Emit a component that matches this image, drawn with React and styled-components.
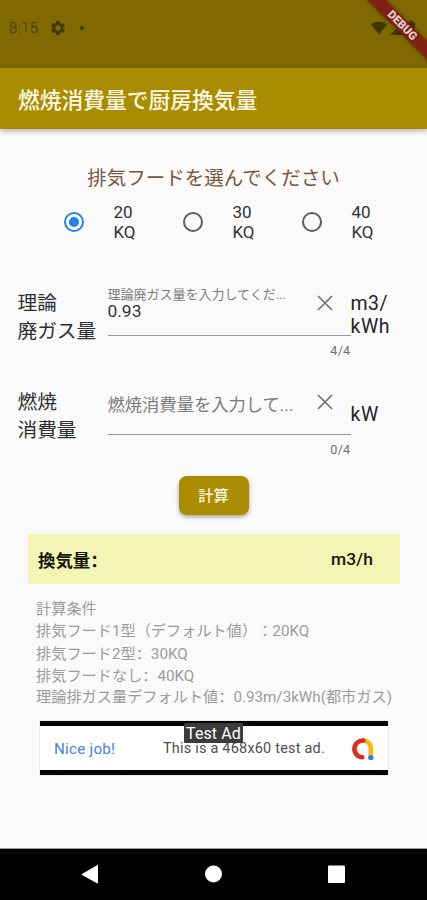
import React, { useState } from "react";
import styled, { createGlobalStyle } from "styled-components";

const GlobalStyle = createGlobalStyle`
  *, *::before, *::after { box-sizing: border-box; }
  body {
    margin: 0;
    background: #fafafa;
    font-family: Roboto, "Noto Sans CJK JP", sans-serif;
    text-spacing-trim: space-all;
  }
`;

const Screen = styled.div`
  position: relative;
  display: flex;
  flex-direction: column;
  width: 427px;
  height: 900px;
  overflow: hidden;
  background: #fafafa;
  color: #222;
`;

const StatusBar = styled.header`
  display: flex;
  align-items: center;
  flex: none;
  height: 68px;
  padding: 0 9px 13px 9px;
  background: #7f6900;
  color: #413600;
`;

const Clock = styled.span`
  width: 42px;
  font-size: 15px;
  font-weight: 300;
  letter-spacing: 0.35px;
`;

const StatusDot = styled.span`
  width: 4px;
  height: 4px;
  margin-left: 15px;
  border-radius: 50%;
  background: currentColor;
`;

const StatusIcons = styled.div`
  display: flex;
  align-items: center;
  gap: 3px;
  margin-left: auto;
  margin-right: 3px;
`;

const Ribbon = styled.div`
  position: absolute;
  top: 19px;
  left: 341.5px;
  width: 120px;
  height: 13.4px;
  transform: rotate(45deg);
  background: #7e2013;
  box-shadow: 0 0 5px rgba(0, 0, 0, 0.35);
  color: #e4cfcb;
  font-size: 11.5px;
  font-weight: 900;
  line-height: 13.4px;
  text-align: center;
`;

const AppBar = styled.div`
  display: flex;
  align-items: center;
  flex: none;
  height: 61px;
  padding: 4px 18px 0;
  background: #aa8c00;
  box-shadow: 0 2px 5px rgba(0, 0, 0, 0.3);
`;

const Title = styled.h1`
  margin: 0;
  color: #fff8e6;
  font-size: 21.75px;
  font-weight: 500;
  line-height: 30px;
`;

const Main = styled.main`
  display: flex;
  flex-direction: column;
  flex: 1;
`;

const Prompt = styled.h2`
  margin: 36px 0 0;
  color: #79563b;
  font-size: 19.5px;
  font-weight: 400;
  line-height: 28px;
  text-align: center;
`;

const RadioGroup = styled.div`
  display: flex;
  height: 40px;
  margin: 9px 0 0 64.4px;
`;

const RadioOption = styled.div`
  display: flex;
  align-items: center;
  gap: 29px;
  width: 119px;
  cursor: pointer;
`;

const RadioMark = styled.span`
  display: grid;
  place-items: center;
  width: 20px;
  height: 20px;
  border: 2px solid ${(p) => (p.$on ? "#2583e8" : "#5d5d5d")};
  border-radius: 50%;

  &::after {
    content: "";
    width: 10px;
    height: 10px;
    border-radius: 50%;
    background: ${(p) => (p.$on ? "#2583e8" : "transparent")};
  }
`;

const RadioLabel = styled.span`
  width: 30px;
  color: #333;
  font-size: 17px;
  line-height: 20px;
`;

const FieldGroup = styled.div`
  flex: none;
  height: 191px;
  margin-top: 43px;
`;

const FieldRow = styled.section`
  display: grid;
  grid-template-columns: 90px 243px 1fr;
  height: 99px;
  padding-left: 17.5px;
`;

const FieldName = styled.div`
  padding-top: 5px;
  font-size: 19.7px;
  line-height: 28px;
  white-space: nowrap;
  color: #303030;
`;

const FieldBody = styled.div`
  display: flex;
  flex-direction: column;
`;

const InputBox = styled.div`
  display: flex;
  justify-content: space-between;
  height: 51px;
  border-bottom: 1px solid #999;
`;

const InputText = styled.div`
  padding-top: ${(p) => (p.$filled ? "0" : "9px")};
`;

const FloatingLabel = styled.div`
  height: 17px;
  color: #7c7c7c;
  font-size: 13px;
  line-height: 20px;
  white-space: nowrap;
`;

const Value = styled.div`
  color: #333;
  font-size: 17.4px;
  line-height: 18px;
`;

const Placeholder = styled.div`
  color: #7c7c7c;
  font-size: 17.3px;
  line-height: 24px;
  white-space: nowrap;
`;

const ClearButton = styled.button`
  display: block;
  width: 26px;
  height: 26px;
  margin: 4.5px 13px 0 0;
  padding: 0;
  border: 0;
  background: none;
  flex: none;
`;

const Counter = styled.div`
  padding-top: 7px;
  color: #707070;
  font-size: 12.6px;
  letter-spacing: 0.3px;
  line-height: 16px;
  text-align: right;
`;

const Unit = styled.div`
  padding-top: ${(p) => (p.$single ? "19px" : "7px")};
  color: #242424;
  font-size: 19.5px;
  letter-spacing: 0.5px;
  line-height: 23px;
  white-space: pre-line;
`;

const CalcButton = styled.button`
  align-self: center;
  flex: none;
  width: 70px;
  height: 39px;
  padding: 1px 0 0;
  border: 0;
  border-radius: 8px;
  background: #aa8c00;
  box-shadow: 0 2px 4px rgba(0, 0, 0, 0.35);
  color: #fff6df;
  font: 500 15.2px/38px Roboto, "Noto Sans CJK JP", sans-serif;
`;

const Result = styled.div`
  display: flex;
  align-items: center;
  justify-content: space-between;
  flex: none;
  height: 50px;
  margin: 19px 27px 0 28px;
  padding: 0 27px 0 10px;
  background: #f3f5b5;
  color: #161606;
  font-size: 17.4px;
  font-weight: 700;
`;

const ResultUnit = styled.span`
  font-weight: 500;
  letter-spacing: 0.1px;
`;

/* Full-width colon whose dots sit at the left of its cell. */
const Colon = styled.span`
  font-family: "Noto Sans CJK SC", sans-serif;
`;

const Notes = styled.div`
  margin: 14px 0 0 36px;
  padding-top: 1px;
  height: 108px;
  color: #9c9c9c;
  font-size: 15.2px;
  line-height: 21px;
  white-space: nowrap;
`;

const NoteLine = styled.div`
  height: 21.6px;
`;

const Ad = styled.aside`
  position: relative;
  display: grid;
  grid-template-columns: 109px 1fr 24px;
  align-items: center;
  flex: none;
  height: 54px;
  margin: 15px 39px 0 40px;
  padding: 1px 13px 0 14px;
  border: solid #050505;
  border-width: 5px 0;
  background: #fff;
  box-shadow: 0 0 1px rgba(0, 0, 0, 0.35);
  white-space: nowrap;
`;

const AdHeadline = styled.span`
  color: #4380ec;
  font-size: 15.2px;
  letter-spacing: 0.25px;
`;

const AdCopy = styled.span`
  color: #505050;
  font-size: 14.5px;
  letter-spacing: 0.2px;
`;

const AdBadge = styled.span`
  position: absolute;
  top: -3px;
  left: 144px;
  width: 59px;
  height: 20px;
  border-radius: 1px;
  background: #3b3b3b;
  color: #fff;
  font-size: 16px;
  letter-spacing: 0.1px;
  line-height: 21px;
  text-align: center;
`;

const NavBar = styled.nav`
  display: flex;
  align-items: center;
  justify-content: space-between;
  flex: none;
  height: 51px;
  padding: 0 80px 1px 79px;
  background: #000;
  box-shadow: 0 -1px 0 #999;
`;

const GearIcon = () => (
  <svg width="14" height="14" viewBox="2 2 20 20" fill="currentColor">
    <path
      fillRule="evenodd"
      d="M19.43 12.98a7.8 7.8 0 0 0 0-1.96l2.11-1.65c.19-.15.24-.42.12-.64l-2-3.46c-.12-.22-.39-.3-.61-.22l-2.49 1a7.3 7.3 0 0 0-1.69-.98l-.38-2.65A.49.49 0 0 0 14 2h-4a.49.49 0 0 0-.49.42l-.38 2.65c-.61.25-1.17.59-1.69.98l-2.49-1a.49.49 0 0 0-.61.22l-2 3.46c-.13.22-.07.49.12.64l2.11 1.65a7.8 7.8 0 0 0 0 1.96l-2.11 1.65c-.19.15-.24.42-.12.64l2 3.46c.12.22.39.3.61.22l2.49-1c.52.4 1.08.73 1.69.98l.38 2.65c.03.24.24.42.49.42h4c.25 0 .46-.18.49-.42l.38-2.65c.61-.25 1.17-.59 1.69-.98l2.49 1c.23.09.49 0 .61-.22l2-3.46a.5.5 0 0 0-.12-.64zM12 15.8a3.8 3.8 0 1 1 0-7.6 3.8 3.8 0 0 1 0 7.600z"
    />
  </svg>
);

const WifiIcon = () => (
  <svg width="16" height="14" viewBox="0 0 16 14" fill="currentColor">
    <path d="M0 3.6C4.6-.2 11.4-.2 16 3.6L8 13.6z" />
  </svg>
);

const SignalIcon = () => (
  <svg width="14" height="14" viewBox="0 0 14 14" fill="currentColor">
    <path d="M0 14 14 0v14z" />
  </svg>
);

const BatteryIcon = () => (
  <svg width="8" height="15" viewBox="0 0 9 15" fill="currentColor">
    <path d="M2.7 0h3.6v1.6H8q1 0 1 1V14q0 1-1 1H1q-1 0-1-1V2.600q0-1 1-1h1.700z" />
  </svg>
);

const CloseIcon = () => (
  <svg width="26" height="26" viewBox="0 0 26 26" stroke="#747474" strokeWidth="1.7">
    <path d="M6 6l14 14M20 6L6 20" />
  </svg>
);

const AdLogo = () => (
  <svg width="24" height="24" viewBox="0 0 24 24" fill="none" strokeWidth="4.6" strokeLinecap="round">
    <path d="M12 3.500A7.600 8 0 0 1 19.800 12V18.500" stroke="#fbb70b" />
    <path d="M12.300 3.500A8.400 8.400 0 0 0 11.300 20.300" stroke="#e02b20" />
    <circle cx="19.800" cy="20.600" r="2.700" fill="#2b7de9" />
  </svg>
);

const BackIcon = () => (
  <svg width="20" height="20" viewBox="0 0 20 20" fill="#fff" stroke="#fff" strokeLinejoin="round">
    <path d="M3 10.500 18.500 1.500v17.500z" />
  </svg>
);

const HomeIcon = () => (
  <svg width="18" height="18" viewBox="0 0 18 18" fill="#fff">
    <circle cx="9.500" cy="9" r="8.500" />
  </svg>
);

const RecentsIcon = () => (
  <svg width="20" height="20" viewBox="0 0 20 20" fill="#fff">
    <rect x="1" y="1.500" width="17" height="17.500" rx="1" />
  </svg>
);

const Field = ({ name, label, value, unit }) => (
  <FieldRow>
    <FieldName>
      {name[0]}
      <br />
      {name[1]}
    </FieldName>
    <FieldBody>
      <InputBox>
        <InputText $filled={Boolean(value)}>
          {value ? (
            <>
              <FloatingLabel>{label}</FloatingLabel>
              <Value>{value}</Value>
            </>
          ) : (
            <Placeholder>{label}</Placeholder>
          )}
        </InputText>
        <ClearButton aria-label="clear">
          <CloseIcon />
        </ClearButton>
      </InputBox>
      <Counter>{value.length}/4</Counter>
    </FieldBody>
    <Unit $single={!unit.includes("\n")}>{unit}</Unit>
  </FieldRow>
);

export default function App() {
  const [hood, setHood] = useState(20);

  return (
    <Screen>
      <GlobalStyle />
      <StatusBar>
        <Clock>8:15</Clock>
        <GearIcon />
        <StatusDot />
        <StatusIcons>
          <WifiIcon />
          <SignalIcon />
          <BatteryIcon />
        </StatusIcons>
      </StatusBar>
      <AppBar>
        <Title>燃焼消費量で厨房換気量</Title>
      </AppBar>
      <Main>
        <Prompt>排気フードを選んでください</Prompt>
        <RadioGroup>
          {[20, 30, 40].map((kq) => (
            <RadioOption key={kq} onClick={() => setHood(kq)}>
              <RadioMark $on={hood === kq} />
              <RadioLabel>
                {kq}
                <br />
                KQ
              </RadioLabel>
            </RadioOption>
          ))}
        </RadioGroup>
        <FieldGroup>
          <Field
            name={["理論", "廃ガス量"]}
            label="理論廃ガス量を入力してくだ..."
            value="0.93"
            unit={"m3/\nkWh"}
          />
          <Field name={["燃焼", "消費量"]} label="燃焼消費量を入力して..." value="" unit="kW" />
        </FieldGroup>
        <CalcButton>計算</CalcButton>
        <Result>
          <span>
            換気量<Colon>：</Colon>
          </span>
          <ResultUnit>m3/h</ResultUnit>
        </Result>
        <Notes>
          <NoteLine>計算条件</NoteLine>
          <NoteLine>排気フード1型（デフォルト値）：20KQ</NoteLine>
          <NoteLine>
            排気フード2型<Colon>：</Colon>30KQ
          </NoteLine>
          <NoteLine>
            排気フードなし<Colon>：</Colon>40KQ
          </NoteLine>
          <NoteLine>
            理論排ガス量デフォルト値<Colon>：</Colon>0.93m/3kWh(都市ガス)
          </NoteLine>
        </Notes>
        <Ad>
          <AdHeadline>Nice job!</AdHeadline>
          <AdCopy>This is a 468x60 test ad.</AdCopy>
          <AdLogo />
          <AdBadge>Test Ad</AdBadge>
        </Ad>
      </Main>
      <NavBar>
        <BackIcon />
        <HomeIcon />
        <RecentsIcon />
      </NavBar>
      <Ribbon>DEBUG</Ribbon>
    </Screen>
  );
}
